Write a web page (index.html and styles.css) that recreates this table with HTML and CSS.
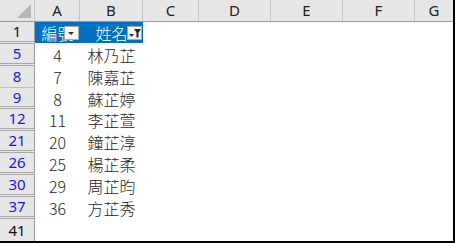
FILE: index.html
```html
<!DOCTYPE html>
<html>
<head>
<meta charset="utf-8">
<link rel="stylesheet" href="styles.css">
</head>
<body>
<div class="sheet">
  <div class="row head">
    <div class="corner"><span class="tri"></span></div>
    <div class="ch">A</div>
    <div class="ch">B</div>
    <div class="ch">C</div>
    <div class="ch">D</div>
    <div class="ch">E</div>
    <div class="ch">F</div>
    <div class="ch last">G</div>
  </div>
  <div class="row">
    <div class="rh plain dbl">1</div>
    <div class="c th">編號<span class="fbtn"><svg width="15" height="14" viewBox="0 0 15 14"><path d="M4 6h6l-3 3z" fill="#333"/></svg></span></div>
    <div class="c th">姓名<span class="fbtn"><svg width="15" height="14" viewBox="0 0 15 14"><path d="M2 8h5l-2.5 3z" fill="#333"/><path d="M7 3h7l-2.5 3.5v5h-2v-5z" fill="#222"/></svg></span></div>
    <div class="c"></div><div class="c"></div><div class="c"></div><div class="c"></div><div class="c"></div>
  </div>
  <div class="row">
    <div class="rh dbl">5</div>
    <div class="c num">4</div><div class="c txt">林乃芷</div>
    <div class="c"></div><div class="c"></div><div class="c"></div><div class="c"></div><div class="c"></div>
  </div>
  <div class="row">
    <div class="rh">8</div>
    <div class="c num">7</div><div class="c txt">陳嘉芷</div>
    <div class="c"></div><div class="c"></div><div class="c"></div><div class="c"></div><div class="c"></div>
  </div>
  <div class="row short">
    <div class="rh dbl">9</div>
    <div class="c num">8</div><div class="c txt">蘇芷婷</div>
    <div class="c"></div><div class="c"></div><div class="c"></div><div class="c"></div><div class="c"></div>
  </div>
  <div class="row">
    <div class="rh dbl">12</div>
    <div class="c num">11</div><div class="c txt">李芷萱</div>
    <div class="c"></div><div class="c"></div><div class="c"></div><div class="c"></div><div class="c"></div>
  </div>
  <div class="row">
    <div class="rh dbl">21</div>
    <div class="c num">20</div><div class="c txt">鐘芷淳</div>
    <div class="c"></div><div class="c"></div><div class="c"></div><div class="c"></div><div class="c"></div>
  </div>
  <div class="row">
    <div class="rh dbl">26</div>
    <div class="c num">25</div><div class="c txt">楊芷柔</div>
    <div class="c"></div><div class="c"></div><div class="c"></div><div class="c"></div><div class="c"></div>
  </div>
  <div class="row">
    <div class="rh dbl">30</div>
    <div class="c num">29</div><div class="c txt">周芷昀</div>
    <div class="c"></div><div class="c"></div><div class="c"></div><div class="c"></div><div class="c"></div>
  </div>
  <div class="row">
    <div class="rh dbl">37</div>
    <div class="c num">36</div><div class="c txt">方芷秀</div>
    <div class="c"></div><div class="c"></div><div class="c"></div><div class="c"></div><div class="c"></div>
  </div>
  <div class="row">
    <div class="rh plain end">41</div>
    <div class="c"></div><div class="c"></div>
    <div class="c"></div><div class="c"></div><div class="c"></div><div class="c"></div><div class="c"></div>
  </div>
</div>
</body>
</html>
```
FILE: styles.css
```css
* { box-sizing: border-box; }
html, body { margin: 0; padding: 0; background: #fff; }
.sheet {
  width: 455px;
  height: 243px;
  border-right: 2px solid #000;
  border-bottom: 2px solid #000;
  overflow: hidden;
  font-family: "Noto Sans CJK TC", "Noto Sans", sans-serif;
}
.row {
  display: grid;
  grid-template-columns: 35px 45px 63px 56px 72px 72px 72px 1fr;
  height: 22px;
}
.row.short { height: 21px; }
.head { background: #e6e6e6; border-bottom: 1px solid #9b9b9b; }
.corner {
  position: relative;
  border-right: 1px solid #c4c4c4;
}
.tri {
  position: absolute;
  right: 3px;
  bottom: 3px;
  width: 0;
  height: 0;
  border-left: 14px solid transparent;
  border-bottom: 14px solid #b5b5b5;
}
.ch {
  border-right: 1px solid #c4c4c4;
  display: flex;
  align-items: center;
  justify-content: center;
  font-family: "Noto Sans", sans-serif;
  font-size: 15px;
  color: #222;
  line-height: 1;
}
.ch.last { border-right: none; }
.rh {
  background: #e6e6e6;
  border-right: 1px solid #9b9b9b;
  border-bottom: 1px solid #bdbdbd;
  display: flex;
  align-items: center;
  justify-content: center;
  font-family: "Noto Sans", sans-serif;
  font-size: 15px;
  color: #1515f0;
  line-height: 1;
}
.rh.dbl { border-bottom: 3px double #a8a8a8; }
.rh.plain { color: #111; }
.rh.end { border-bottom: none; }
.c {
  position: relative;
  display: flex;
  align-items: center;
  justify-content: center;
  font-size: 16px;
  font-weight: 300;
  color: #262626;
  line-height: 1;
  white-space: nowrap;
  overflow: hidden;
}
.th {
  background: #0070c0;
  color: #fff;
  overflow: visible;
  margin-bottom: 1px;
}
.fbtn {
  position: absolute;
  right: 1px;
  top: 4px;
  width: 15px;
  height: 14px;
  background: #f6f6f6;
  border: 1px solid #a9a9a9;
  display: block;
}
.fbtn svg { display: block; margin: -1px 0 0 -1px; }
```
